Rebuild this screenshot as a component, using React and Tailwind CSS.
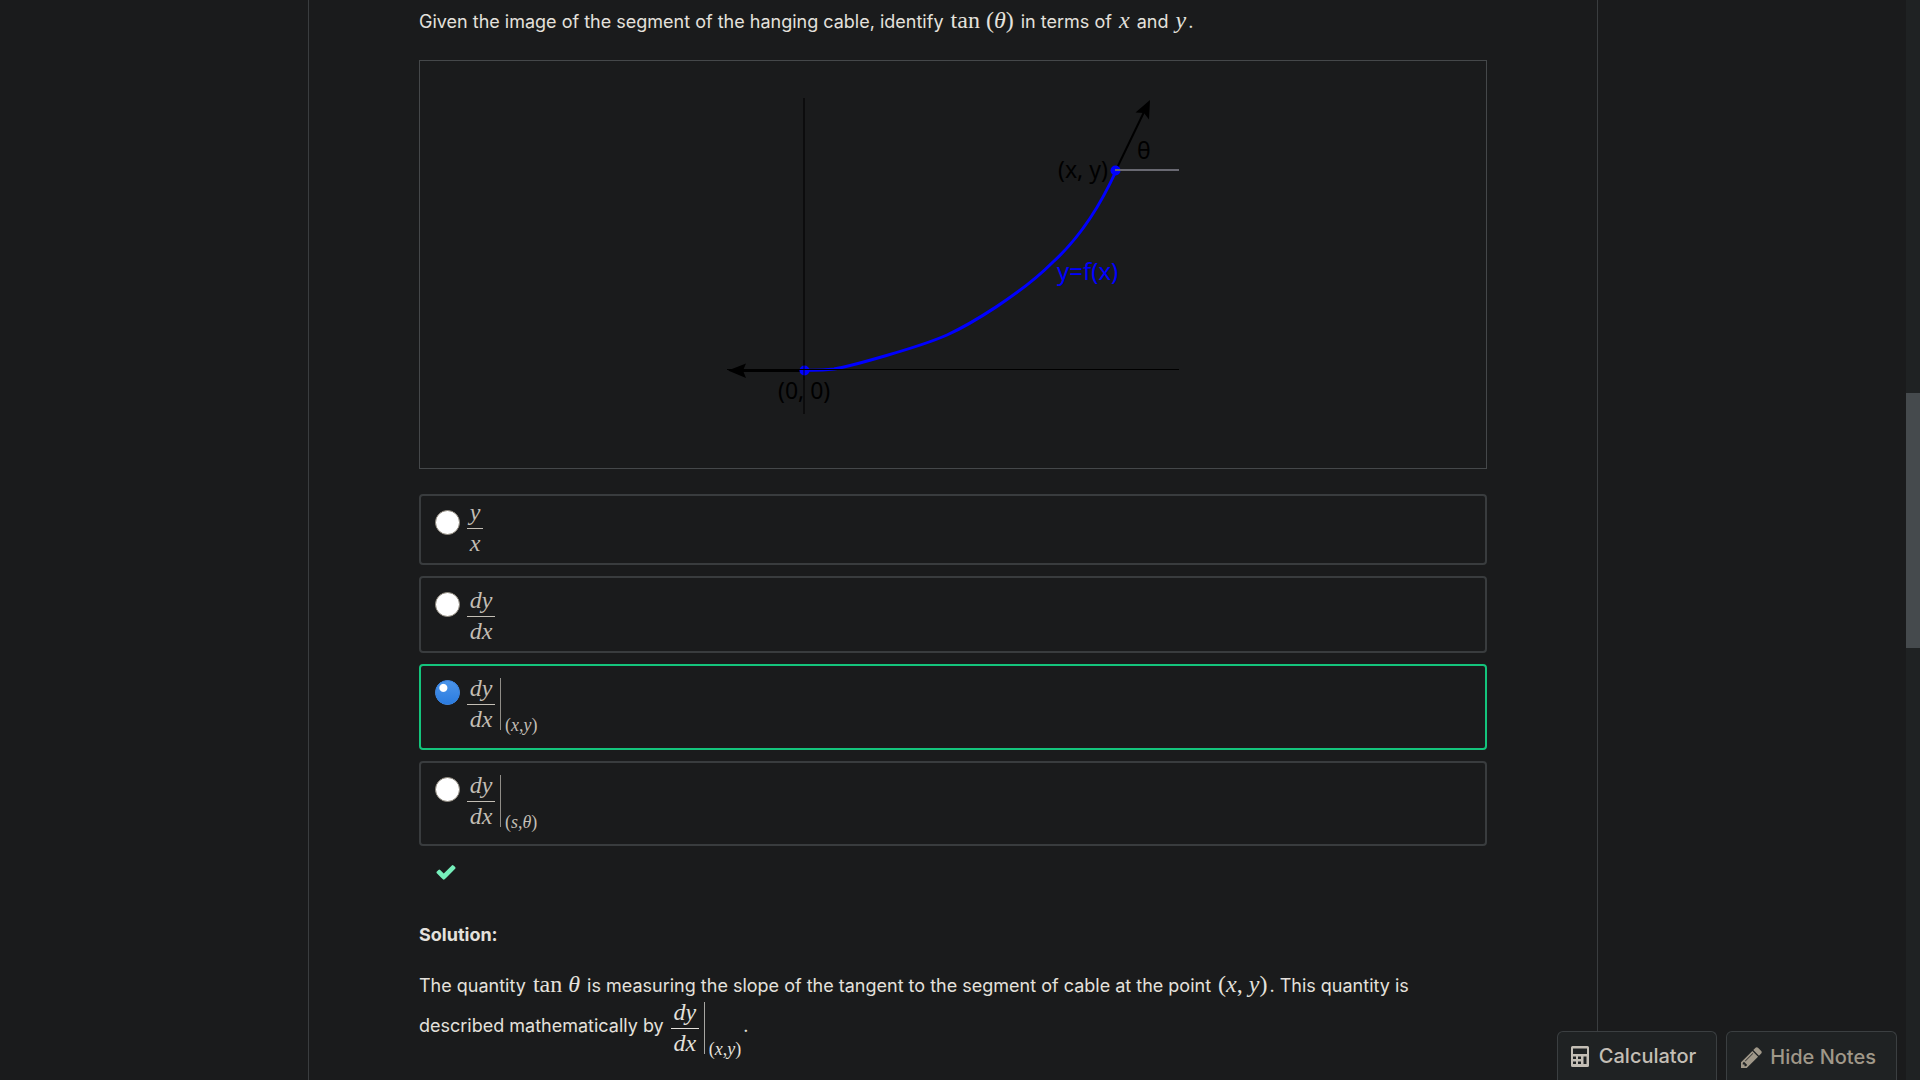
const serif = "font-['Liberation_Serif',serif]";

function Fraction({ top, bottom, narrow }) {
  return (
    <span className={`inline-flex flex-col items-center ${narrow ? "w-4" : "w-7"}`}>
      <span className="pb-0.5 leading-7">{top}</span>
      <span className="h-px w-full bg-current" />
      <span className="leading-7">{bottom}</span>
    </span>
  );
}

function DyDx() {
  return <Fraction top={<i>dy</i>} bottom={<i>dx</i>} />;
}

function Evaluated({ a, b }) {
  return (
    <span className="inline-flex items-start">
      <DyDx />
      <span className="ml-[5px] mt-1 h-[52px] w-px bg-current opacity-70" />
      <span className="ml-1 pt-[43px] text-lg leading-4">
        (<i>{a}</i>,<i>{b}</i>)
      </span>
    </span>
  );
}

function Formula({ children }) {
  return <span className="px-0.5 font-['Liberation_Serif',serif] text-2xl leading-6">{children}</span>;
}

const options = [
  { id: "ratio", pad: "pt-0.5 pb-1.5", math: <Fraction narrow top={<i>y</i>} bottom={<i>x</i>} /> },
  { id: "derivative", pad: "pt-2 pb-1.5", math: <DyDx /> },
  { id: "at-xy", pad: "pt-2 pb-[15px]", math: <Evaluated a="x" b="y" /> },
  { id: "at-stheta", pad: "pt-2 pb-3.5", math: <Evaluated a="s" b="θ" /> },
];

function Option({ id, pad, math }) {
  return (
    <label
      htmlFor={id}
      className={`flex items-start rounded border-2 border-[#393c3e] pl-3.5 text-[#c3beb5] has-checked:border-[#14c47c] ${pad}`}
    >
      <input
        id={id}
        type="radio"
        name="answer"
        defaultChecked={id === "at-xy"}
        className={`size-[25px] shrink-0 appearance-none rounded-full border border-[#8d877c] bg-white checked:border-[#2f7de0] checked:bg-[radial-gradient(circle_at_32%_30%,#fff_0,#fff_3.5px,transparent_4.5px),linear-gradient(#4c95ea,#2b7ce0)] ${id === "ratio" ? "mt-3" : "mt-1.5"}`}
      />
      <span className={`ml-[7px] inline-flex text-2xl ${serif}`}>{math}</span>
    </label>
  );
}

function CableDiagram() {
  return (
    <svg viewBox="725 76 456 376" className="h-[376px] w-[456px]" role="img" aria-label="Segment of a hanging cable">
      <path d="M804 98V414" stroke="#0c0c0d" strokeWidth="2" />
      <path d="M740 370.5H804" stroke="#000" strokeWidth="3" />
      <path d="M728 370.5l18-7-3 7 3 7.500z" fill="#000" />
      <path d="M1116 170L1144 112" stroke="#000" strokeWidth="2" />
      <path d="M1150 100l-14.500 12.500 8.500 .5 5 6.500z" fill="#000" />
      <path
        d="M805 370C815 370.500 824 370 834 369C848 367 920 347 947 335C969 325 1020 295 1053 262C1075 242 1096 215 1116 171"
        fill="none"
        stroke="#00f"
        strokeWidth="3"
      />
      <circle cx="804.500" cy="370.500" r="5" fill="#00f" />
      <circle cx="1115.500" cy="170.500" r="5" fill="#00f" />
      <path d="M727 369.500H1179" stroke="#000" strokeWidth="1" />
      <path d="M804 360V380" stroke="#000" strokeOpacity=".4" strokeWidth="2" />
      <path d="M1115 170H1179" stroke="#696972" strokeWidth="2" />
      <g fontFamily="'Noto Sans', sans-serif" fontSize="23">
        <text x="778" y="399">(0, 0)</text>
        <text x="1058" y="178">(x, y)</text>
        <text x="1137" y="159">θ</text>
        <text x="1057" y="280" fontSize="24" fill="#00f">y=f(x)</text>
      </g>
    </svg>
  );
}

function CalculatorIcon() {
  return (
    <svg viewBox="0 0 18 21" className="h-[21px] w-[18px]" aria-hidden="true">
      <path
        fill="currentColor"
        fillRule="evenodd"
        d="M1.500 0h15A1.500 1.500 0 0 1 18 1.500v18a1.500 1.500 0 0 1-1.500 1.500h-15A1.500 1.500 0 0 1 0 19.500v-18A1.500 1.500 0 0 1 1.500 0zM2 2.500V8h14V2.500zM2 10.500v2.500h3v-2.500zM7 10.500v2.500h3v-2.500zM12.500 10.500V18H15.500v-7.500zM2 15.500V18h3v-2.500zM7 15.500V18h3v-2.500z"
      />
    </svg>
  );
}

function PencilIcon() {
  return (
    <svg viewBox="128 128 1536 1536" className="size-[21px]" aria-hidden="true">
      <path
        fill="currentColor"
        d="M491 1536l91-91-235-235-91 91v107h128v128h107zm523-928q0-22-22-22-10 0-17 7l-542 542q-7 7-7 17 0 22 22 22 10 0 17-7l542-542q7-7 7-17zm-54-192l416 416-832 832h-416v-416zm683 96q0 53-37 90l-166 166-416-416 166-165q36-38 90-38 53 0 91 38l235 234q37 39 37 91z"
      />
    </svg>
  );
}

function CheckIcon() {
  return (
    <svg viewBox="0 0 1792 1792" className="ml-4 mt-[15px] size-[22px] text-[#76efbb]" aria-hidden="true">
      <path
        fill="currentColor"
        d="M1671 566q0 40-28 68l-724 724-136 136q-28 28-68 28t-68-28l-136-136-362-362q-28-28-28-68t28-68l136-136q28-28 68-28t68 28l294 295 656-657q28-28 68-28t68 28l136 136q28 28 28 68z"
      />
    </svg>
  );
}

export default function App() {
  return (
    <div className="flex h-screen overflow-hidden bg-[#1a1b1c] font-['Inter',sans-serif] text-lg text-[#e4e1dc]">
      <div className="relative min-w-0 flex-1">
        <main className="mx-auto min-h-screen max-w-[1290px] border-x border-[#3a3d3f] px-[110px]">
          <p className="pt-0.5 leading-10">
            Given the image of the segment of the hanging cable, identify{" "}
            <Formula>tan (<i>θ</i>)</Formula> in terms of <Formula><i>x</i></Formula> and <Formula><i>y</i></Formula>.
          </p>

          <div className="mt-[18px] flex justify-center border border-[#45484a] pb-4 pt-[15px]">
            <CableDiagram />
          </div>

          <form className="mt-[25px] flex flex-col gap-[11px]">
            {options.map((option) => (
              <Option key={option.id} {...option} />
            ))}
          </form>

          <CheckIcon />

          <h2 className="mt-[38px] font-bold leading-7">Solution:</h2>
          <p className="mt-[17px] leading-10">
            The quantity <Formula>tan <i>θ</i></Formula> is measuring the slope of the tangent to the segment of cable at
            the point <Formula>(<i>x</i>, <i>y</i>)</Formula>. This quantity is described mathematically by{" "}
            <span className={`-my-4 mx-0.5 inline-flex align-middle text-2xl ${serif}`}>
              <Evaluated a="x" b="y" />
            </span>
            .
          </p>
        </main>

        <div className="absolute bottom-0 right-[9px] flex gap-[9px] text-xl">
          <button type="button" className="flex h-[49px] items-center gap-2.5 rounded-t-md border border-b-0 border-[#3b3f41] bg-[#1f2223] pl-[13px] pr-5 font-medium text-[#c3beb5]">
            <CalculatorIcon />
            Calculator
          </button>
          <button type="button" className="flex h-[49px] items-center gap-2 rounded-t-md border border-b-0 border-[#3b3f41] bg-[#1f2223] pl-3.5 pr-5 pt-0.5 font-medium text-[#a09889]">
            <PencilIcon />
            Hide Notes
          </button>
        </div>
      </div>

      <div className="w-3.5 shrink-0 bg-[#1f2223] pt-[393px]">
        <div className="h-[255px] bg-[#454a4d]" />
      </div>
    </div>
  );
}
